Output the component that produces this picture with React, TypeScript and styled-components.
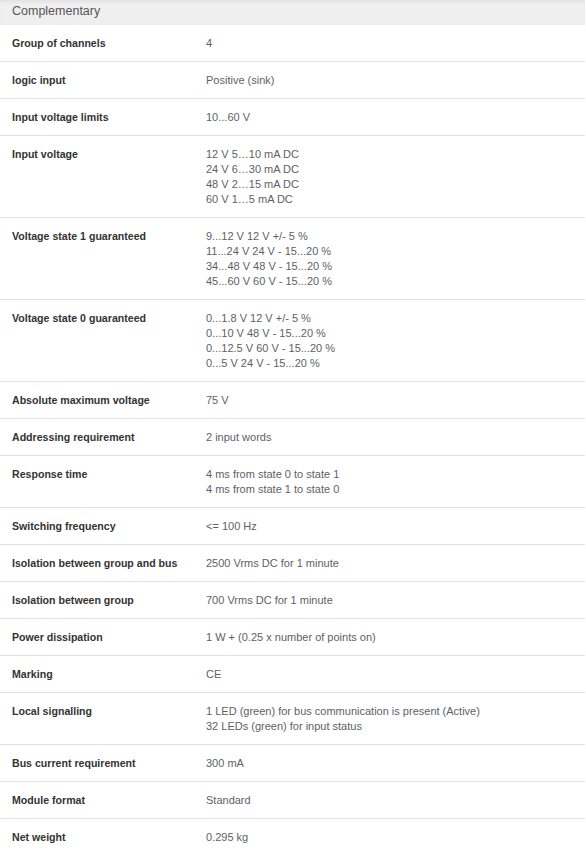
import React from "react";
import styled, { createGlobalStyle } from "styled-components";

const Global = createGlobalStyle`
  html, body { margin: 0; padding: 0; background: #ffffff; }
  body { font-family: "Liberation Sans", Arial, sans-serif; }
`;

const Table = styled.section`
  width: 585px;
  background: #ffffff;
`;

const Header = styled.h2`
  margin: 0;
  height: 25px;
  box-sizing: border-box;
  padding: 3px 12px 0;
  background: #efefef;
  box-shadow: inset 0 3px 3px -1px rgba(0, 0, 0, 0.06);
  font-size: 12.5px;
  font-weight: normal;
  line-height: 16px;
  color: #55565b;
`;

const Row = styled.div`
  display: grid;
  grid-template-columns: 194px 1fr;
  align-items: start;
  border-bottom: 1px solid #e2e2e2;
  padding: 11px 12px 10px;
  font-size: 11px;
  line-height: 15px;
`;

const Label = styled.div`
  font-weight: bold;
  font-size: 10.6px;
  color: #333333;
`;

const Value = styled.div`
  color: #5e5f66;
`;

const rows: [string, string[]][] = [
  ["Group of channels", ["4"]],
  ["logic input", ["Positive (sink)"]],
  ["Input voltage limits", ["10...60 V"]],
  ["Input voltage", ["12 V 5…10 mA DC", "24 V 6…30 mA DC", "48 V 2…15 mA DC", "60 V 1…5 mA DC"]],
  [
    "Voltage state 1 guaranteed",
    ["9...12 V 12 V +/- 5 %", "11...24 V 24 V - 15...20 %", "34...48 V 48 V - 15...20 %", "45...60 V 60 V - 15...20 %"],
  ],
  [
    "Voltage state 0 guaranteed",
    ["0...1.8 V 12 V +/- 5 %", "0...10 V 48 V - 15...20 %", "0...12.5 V 60 V - 15...20 %", "0...5 V 24 V - 15...20 %"],
  ],
  ["Absolute maximum voltage", ["75 V"]],
  ["Addressing requirement", ["2 input words"]],
  ["Response time", ["4 ms from state 0 to state 1", "4 ms from state 1 to state 0"]],
  ["Switching frequency", ["<= 100 Hz"]],
  ["Isolation between group and bus", ["2500 Vrms DC for 1 minute"]],
  ["Isolation between group", ["700 Vrms DC for 1 minute"]],
  ["Power dissipation", ["1 W + (0.25 x number of points on)"]],
  ["Marking", ["CE"]],
  [
    "Local signalling",
    ["1 LED (green) for bus communication is present (Active)", "32 LEDs (green) for input status"],
  ],
  ["Bus current requirement", ["300 mA"]],
  ["Module format", ["Standard"]],
  ["Net weight", ["0.295 kg"]],
];

export default function App() {
  return (
    <>
      <Global />
      <Table>
        <Header>Complementary</Header>
        {rows.map(([label, values]) => (
          <Row key={label}>
            <Label>{label}</Label>
            <Value>
              {values.map((v, i) => (
                <div key={i}>{v}</div>
              ))}
            </Value>
          </Row>
        ))}
      </Table>
    </>
  );
}
